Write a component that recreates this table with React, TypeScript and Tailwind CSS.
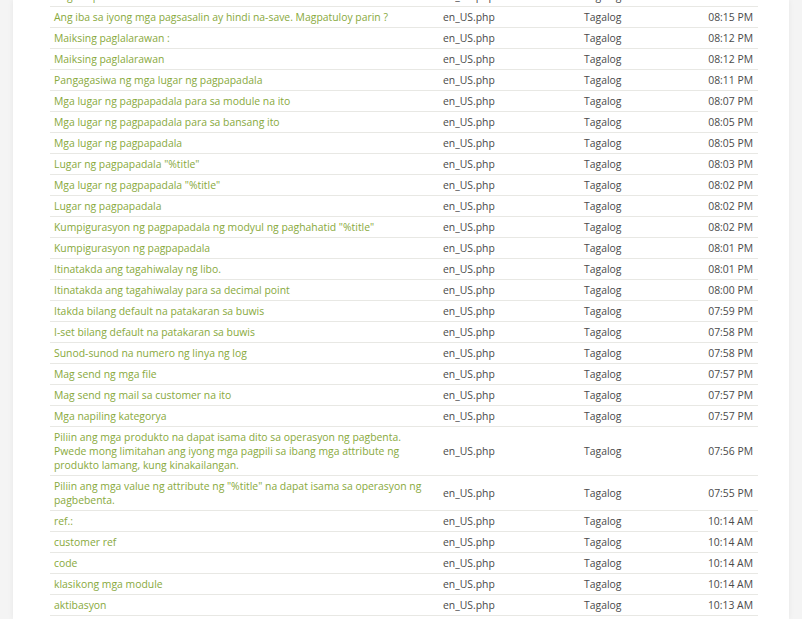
import React from 'react';

type Row = { text: string; file: string; lang: string; time: string };

const rows: Row[] = [
  { text: 'Ang iba pa', file: 'en_US.php', lang: 'Tagalog', time: '08:16 PM' },
  { text: 'Ang iba sa iyong mga pagsasalin ay hindi na-save. Magpatuloy parin ?', file: 'en_US.php', lang: 'Tagalog', time: '08:15 PM' },
  { text: 'Maiksing paglalarawan :', file: 'en_US.php', lang: 'Tagalog', time: '08:12 PM' },
  { text: 'Maiksing paglalarawan', file: 'en_US.php', lang: 'Tagalog', time: '08:12 PM' },
  { text: 'Pangagasiwa ng mga lugar ng pagpapadala', file: 'en_US.php', lang: 'Tagalog', time: '08:11 PM' },
  { text: 'Mga lugar ng pagpapadala para sa module na ito', file: 'en_US.php', lang: 'Tagalog', time: '08:07 PM' },
  { text: 'Mga lugar ng pagpapadala para sa bansang ito', file: 'en_US.php', lang: 'Tagalog', time: '08:05 PM' },
  { text: 'Mga lugar ng pagpapadala', file: 'en_US.php', lang: 'Tagalog', time: '08:05 PM' },
  { text: 'Lugar ng pagpapadala "%title"', file: 'en_US.php', lang: 'Tagalog', time: '08:03 PM' },
  { text: 'Mga lugar ng pagpapadala "%title"', file: 'en_US.php', lang: 'Tagalog', time: '08:02 PM' },
  { text: 'Lugar ng pagpapadala', file: 'en_US.php', lang: 'Tagalog', time: '08:02 PM' },
  { text: 'Kumpigurasyon ng pagpapadala ng modyul ng paghahatid "%title"', file: 'en_US.php', lang: 'Tagalog', time: '08:02 PM' },
  { text: 'Kumpigurasyon ng pagpapadala', file: 'en_US.php', lang: 'Tagalog', time: '08:01 PM' },
  { text: 'Itinatakda ang tagahiwalay ng libo.', file: 'en_US.php', lang: 'Tagalog', time: '08:01 PM' },
  { text: 'Itinatakda ang tagahiwalay para sa decimal point', file: 'en_US.php', lang: 'Tagalog', time: '08:00 PM' },
  { text: 'Itakda bilang default na patakaran sa buwis', file: 'en_US.php', lang: 'Tagalog', time: '07:59 PM' },
  { text: 'I-set bilang default na patakaran sa buwis', file: 'en_US.php', lang: 'Tagalog', time: '07:58 PM' },
  { text: 'Sunod-sunod na numero ng linya ng log', file: 'en_US.php', lang: 'Tagalog', time: '07:58 PM' },
  { text: 'Mag send ng mga file', file: 'en_US.php', lang: 'Tagalog', time: '07:57 PM' },
  { text: 'Mag send ng mail sa customer na ito', file: 'en_US.php', lang: 'Tagalog', time: '07:57 PM' },
  { text: 'Mga napiling kategorya', file: 'en_US.php', lang: 'Tagalog', time: '07:57 PM' },
  { text: 'Piliin ang mga produkto na dapat isama dito sa operasyon ng pagbenta. Pwede mong limitahan ang iyong mga pagpili sa ibang mga attribute ng produkto lamang, kung kinakailangan.', file: 'en_US.php', lang: 'Tagalog', time: '07:56 PM' },
  { text: 'Piliin ang mga value ng attribute ng "%title" na dapat isama sa operasyon ng pagbebenta.', file: 'en_US.php', lang: 'Tagalog', time: '07:55 PM' },
  { text: 'ref.:', file: 'en_US.php', lang: 'Tagalog', time: '10:14 AM' },
  { text: 'customer ref', file: 'en_US.php', lang: 'Tagalog', time: '10:14 AM' },
  { text: 'code', file: 'en_US.php', lang: 'Tagalog', time: '10:14 AM' },
  { text: 'klasikong mga module', file: 'en_US.php', lang: 'Tagalog', time: '10:14 AM' },
  { text: 'aktibasyon', file: 'en_US.php', lang: 'Tagalog', time: '10:13 AM' },
];

const App: React.FC = () => {
  return (
    <div className="h-[619px] overflow-hidden bg-[#f4f4f4] font-['Open_Sans',sans-serif]">
      <div className="mx-[13px] flex h-full flex-col bg-white pl-[37px] pr-[31px] shadow-[0_0_6px_rgba(0,0,0,0.06)]">
        <table className="-mt-[14px] w-full table-fixed border-collapse text-[10.4px] leading-[14px]">
          <colgroup>
            <col className="w-[389px]" />
            <col className="w-[141px]" />
            <col className="w-[120px]" />
            <col />
          </colgroup>
          <tbody>
            {rows.map((row, i) => (
              <tr key={i} className="border-b border-[#e8e8e4]">
                <td className="py-[3px] pl-[4px] pr-[4px] align-middle text-[#88a93c]">
                  {row.text}
                </td>
                <td className="py-[3px] pl-[4px] align-middle text-[#4a4a4a]">{row.file}</td>
                <td className="py-[3px] pl-[4px] align-middle text-[#4a4a4a]">{row.lang}</td>
                <td className="py-[3px] pr-[5px] text-right align-middle text-[#4a4a4a]">
                  {row.time}
                </td>
              </tr>
            ))}
          </tbody>
        </table>
      </div>
    </div>
  );
};

export default App;
